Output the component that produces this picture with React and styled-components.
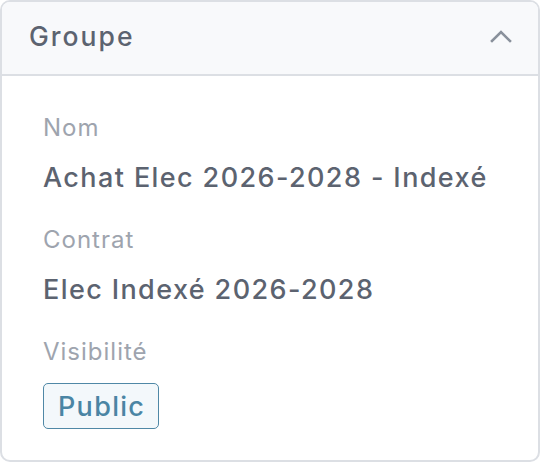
import React from "react";
import styled, { createGlobalStyle } from "styled-components";

const Global = createGlobalStyle`
  html, body { margin: 0; padding: 0; background: #ffffff; }
  * { box-sizing: border-box; }
`;

const Card = styled.section`
  width: 540px;
  height: 462px;
  border: 2px solid #dcdfe4;
  border-radius: 10px;
  overflow: hidden;
  background: #ffffff;
  font-family: Inter, "Noto Sans", sans-serif;
`;

const Header = styled.header`
  height: 74px;
  display: flex;
  align-items: center;
  justify-content: space-between;
  padding: 0 26px 5px 27px;
  background: #f8f9fb;
  border-bottom: 2px solid #dcdfe4;
`;

const Title = styled.h2`
  margin: 0;
  font-size: 26.5px;
  font-weight: 500;
  color: #5c6370;
  letter-spacing: 2px;
`;

const Body = styled.div`
  padding: 35px 41px 0;
  display: flex;
  flex-direction: column;
`;

const Field = styled.div`
  display: flex;
  flex-direction: column;
  gap: ${(p) => p.$gap ?? 15}px;
  margin-bottom: 27px;
`;

const Label = styled.span`
  font-size: 24px;
  line-height: 34px;
  color: #9ea4ae;
  font-weight: 400;
  letter-spacing: 1px;
`;

const Value = styled.span`
  font-size: 27px;
  line-height: 36px;
  font-weight: 500;
  color: #5c6370;
  letter-spacing: 1.4px;
`;

const Badge = styled.span`
  align-self: flex-start;
  display: inline-flex;
  align-items: center;
  height: 46px;
  padding: 0 13px 0 14px;
  border: 1.5px solid #4f88a6;
  border-radius: 5px;
  background: #f3f8fb;
  color: #4a85a4;
  font-size: 27px;
  font-weight: 500;
  letter-spacing: 1.3px;
`;

const Chevron = () => (
  <svg width="22" height="14" viewBox="0 0 22 14" fill="none">
    <path d="M2 12 L11 3 L20 12" stroke="#8a919c" strokeWidth="2.6" strokeLinecap="square" />
  </svg>
);

export default function App() {
  return (
    <>
      <Global />
      <Card>
        <Header>
          <Title>Groupe</Title>
          <Chevron />
        </Header>
        <Body>
          <Field>
            <Label>Nom</Label>
            <Value>Achat Elec 2026-2028 - Indexé</Value>
          </Field>
          <Field>
            <Label>Contrat</Label>
            <Value>Elec Indexé 2026-2028</Value>
          </Field>
          <Field $gap={14}>
            <Label>Visibilité</Label>
            <Badge>Public</Badge>
          </Field>
        </Body>
      </Card>
    </>
  );
}
